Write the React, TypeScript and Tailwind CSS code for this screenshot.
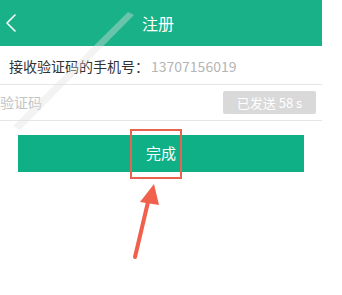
const cjk = { fontFamily: '"Noto Sans CJK SC", "Noto Sans", sans-serif' };

function BackIcon() {
  return (
    <svg width="12" height="18" viewBox="0 0 12 18" fill="none">
      <path d="M10 1 L2 9 L10 17" stroke="white" strokeWidth="1.6" strokeLinecap="round" strokeLinejoin="round" />
    </svg>
  );
}

export default function App() {
  return (
    <div className="relative w-[342px] h-[295px] bg-white overflow-hidden" style={cjk}>
      <div className="w-[322px] flex flex-col">
        <div className="h-[46px] bg-[#18b188] flex items-center relative">
          <div className="pl-[5px] flex items-center">
            <BackIcon />
          </div>
          <div className="absolute inset-0 flex items-center justify-center pr-[6px] text-white text-[16px]">
            注册
          </div>
        </div>

        <div className="h-[39px] flex items-center pl-[9px] pt-[2px] border-b border-[#e6e6e6] text-[14px]">
          <span className="text-[#333333]">接收验证码的手机号：</span>
          <span className="text-[#b5b5b5] ml-[2px]">13707156019</span>
        </div>

        <div className="h-[36px] flex items-center justify-between border-b border-[#e6e6e6] pr-[6px]">
          <span className="text-[14px] text-[#c4c4c4]">验证码</span>
          <div className="w-[93px] h-[23px] bg-[#d9d9d9] rounded-[2px] flex items-center justify-center text-white text-[13px]">
            已发送 58 s
          </div>
        </div>

        <div className="mt-[14px] mx-[18px] h-[37px] bg-[#0fb085] flex items-center justify-center text-white text-[15px]">
          完成
        </div>
      </div>

      {/* annotation box */}
      <div className="absolute left-[130px] top-[129px] w-[52px] h-[50px] border-2 border-[#e8634f]" />

      {/* annotation arrow + faint watermark stroke */}
      <svg className="absolute inset-0 pointer-events-none" width="342" height="295">
        <path d="M128 12 L134 15 L20 130 L13 126 Z" fill="#e2e2e2" opacity="0.4" />
        <line x1="135" y1="257" x2="148" y2="202" stroke="#f0604d" strokeWidth="4" strokeLinecap="round" />
        <polygon points="154,184 140,202 159,205" fill="#f0604d" />
      </svg>
    </div>
  );
}
